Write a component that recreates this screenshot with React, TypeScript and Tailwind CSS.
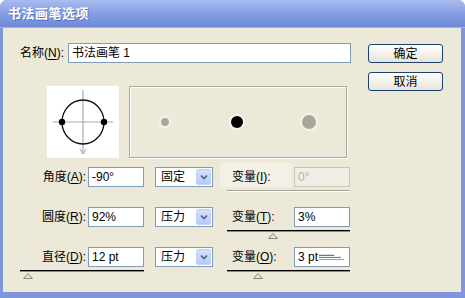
import React from 'react';

const Mn = ({ text, k }: { text: string; k: string }) => (
  <span className="whitespace-nowrap">
    {text}(<span className="underline underline-offset-[2px]">{k}</span>):
  </span>
);

const Field = ({ value, disabled, w = 'w-[56px]', children }: { value: string; disabled?: boolean; w?: string; children?: React.ReactNode }) => (
  <div
    className={`${w} h-[20px] border flex items-center px-[3px] text-[12px] ${
      disabled ? 'border-[#c9c7ba] bg-[#f0eee4] text-[#b5b2a4]' : 'border-[#7f9db9] bg-white text-black'
    }`}
  >
    <span className="whitespace-nowrap">{value}</span>
    {children}
  </div>
);

const Combo = ({ value }: { value: string }) => (
  <div className="w-[58px] h-[20px] border border-[#7f9db9] bg-white flex items-center text-[12px]">
    <span className="flex-1 pl-[5px]">{value}</span>
    <div className="w-[15px] h-[16px] mr-[1px] rounded-[2px] bg-gradient-to-b from-[#d5e1fc] to-[#b4c9f6] border border-[#c3d3f8] flex items-center justify-center">
      <svg width="8" height="6" viewBox="0 0 8 6">
        <path d="M1 1.5 L4 4.5 L7 1.5" fill="none" stroke="#4d6185" strokeWidth="1.6" />
      </svg>
    </div>
  </div>
);

const Slider = ({ pos, disabled }: { pos?: number; disabled?: boolean }) => (
  <div className="relative pt-[3px] h-[10px]">
    <div className={`h-[1px] ${disabled ? 'bg-[#a5a294]' : 'bg-black'}`} />
    <div className={`h-[1px] ${disabled ? 'bg-white' : 'bg-[#8e8b7c]'}`} />
    {pos !== undefined && (
      <svg className="absolute top-[6px]" style={{ left: pos }} width="10" height="6" viewBox="0 0 10 6">
        <path d="M5 0.5 L9.5 5.5 L0.5 5.5 Z" fill="#e4e2d6" stroke="#8c8a80" strokeWidth="1" />
      </svg>
    )}
  </div>
);

type Row = {
  label: string;
  k: string;
  value: string;
  mode: string;
  vk: string;
  vval: string;
  vdisabled?: boolean;
  leftSlider?: number;
  rightSlider?: number;
  lines?: boolean;
};

const rows: Row[] = [
  { label: '角度', k: 'A', value: '-90°', mode: '固定', vk: 'I', vval: '0°', vdisabled: true },
  { label: '圆度', k: 'R', value: '92%', mode: '压力', vk: 'T', vval: '3%', rightSlider: 41 },
  { label: '直径', k: 'D', value: '12 pt', mode: '压力', vk: 'O', vval: '3 pt', leftSlider: 3, rightSlider: 26, lines: true },
];

export default function App() {
  return (
    <div className="w-[465px] h-[298px] bg-white font-['Liberation_Sans','Noto_Sans_CJK_SC',sans-serif] text-[12px] text-black">
      <div className="w-full h-full flex flex-col rounded-t-[7px] overflow-hidden bg-[#7f95dc]">
        <div className="h-[28px] shrink-0 flex items-center pl-[8px] bg-gradient-to-b from-[#a9bbef] via-[#879ee4] to-[#7089d9] border-b border-[#9aaee8]">
          <span className="text-white font-bold text-[13px] tracking-[0.5px] [text-shadow:1px_1px_0_#5a6fb8]">书法画笔选项</span>
        </div>
        <div className="flex-1 ml-[3px] mr-[4px] mb-[6px] bg-[#ece9d8] flex">
          <div className="pl-[17px] pt-[15px] w-[348px]">
            <div className="flex items-center h-[20px]">
              <div className="w-[48px]">
                <Mn text="名称" k="N" />
              </div>
              <Field value="书法画笔 1" w="w-[283px]" />
            </div>

            <div className="flex mt-[23px] ml-[27px]">
              <div className="w-[72px] h-[72px] bg-white">
                <svg width="72" height="72" viewBox="0 0 72 72">
                  <line x1="6" y1="36" x2="66" y2="36" stroke="#a9a9a9" strokeWidth="1.2" />
                  <line x1="36" y1="4" x2="36" y2="68" stroke="#a9a9a9" strokeWidth="1.2" />
                  <path d="M33 63 L36 68 L39 63" fill="none" stroke="#a9a9a9" strokeWidth="1" />
                  <ellipse cx="36" cy="36" rx="21" ry="22" fill="none" stroke="#111" strokeWidth="1.3" />
                  <circle cx="15" cy="36" r="3.2" fill="#000" />
                  <circle cx="57" cy="36" r="3.2" fill="#000" />
                </svg>
              </div>
              <div className="ml-[10px] w-[218px] h-[72px] border border-[#aca899] shadow-[1px_1px_0_#fff,inset_1px_1px_0_#fff]">
                <svg width="216" height="70" viewBox="0 0 216 70">
                  <circle cx="35" cy="35" r="6" fill="#f4f3ec" />
                  <circle cx="35" cy="35" r="4" fill="#aaa89c" />
                  <circle cx="107" cy="35" r="8" fill="#f7f6f0" />
                  <circle cx="107" cy="35" r="6" fill="#000" />
                  <circle cx="179" cy="35" r="9" fill="#f4f3ec" />
                  <circle cx="179" cy="35" r="7" fill="#a9a79b" />
                </svg>
              </div>
            </div>

            <div className="mt-[9px]">
              {rows.map((r) => (
                <div key={r.k} className="flex h-[40px]">
                  <div className="w-[124px]">
                    <div className="flex items-center justify-end h-[20px]">
                      <span className="pr-[2px]">
                        <Mn text={r.label} k={r.k} />
                      </span>
                      <Field value={r.value} />
                    </div>
                    {r.leftSlider !== undefined && <Slider pos={r.leftSlider} />}
                  </div>
                  <div className="ml-[11px] w-[58px]">
                    <Combo value={r.mode} />
                  </div>
                  <div className="ml-[14px] w-[123px]">
                    <div className="flex items-center h-[20px]">
                      <div
                        className={`flex-1 flex items-center pl-[5px] ${
                          r.vdisabled ? 'bg-[#f3f1e7] -ml-[7px] pl-[12px] -mt-[4px] pt-[4px] h-[24px] mr-[2px]' : ''
                        }`}
                      >
                        <Mn text="变量" k={r.vk} />
                      </div>
                      <Field value={r.vval} disabled={r.vdisabled}>
                        {r.lines && (
                          <svg className="ml-[1px]" width="32" height="10" viewBox="0 0 32 10">
                            <line x1="0" y1="3" x2="18" y2="3" stroke="#333" strokeWidth="1" />
                            <line x1="0" y1="5.5" x2="26" y2="5.5" stroke="#555" strokeWidth="1" />
                            <line x1="0" y1="8" x2="30" y2="8" stroke="#888" strokeWidth="1" />
                          </svg>
                        )}
                      </Field>
                    </div>
                    <Slider pos={r.rightSlider} disabled={r.vdisabled} />
                  </div>
                </div>
              ))}
            </div>
          </div>

          <div className="ml-[17px] pt-[16px] flex flex-col gap-[9px]">
            {['确定', '取消'].map((t) => (
              <div
                key={t}
                className="w-[75px] h-[19px] rounded-[3px] border border-[#1c3f6e] bg-gradient-to-b from-white to-[#e6e4da] flex items-center justify-center text-[12px]"
              >
                {t}
              </div>
            ))}
          </div>
        </div>
      </div>
    </div>
  );
}
